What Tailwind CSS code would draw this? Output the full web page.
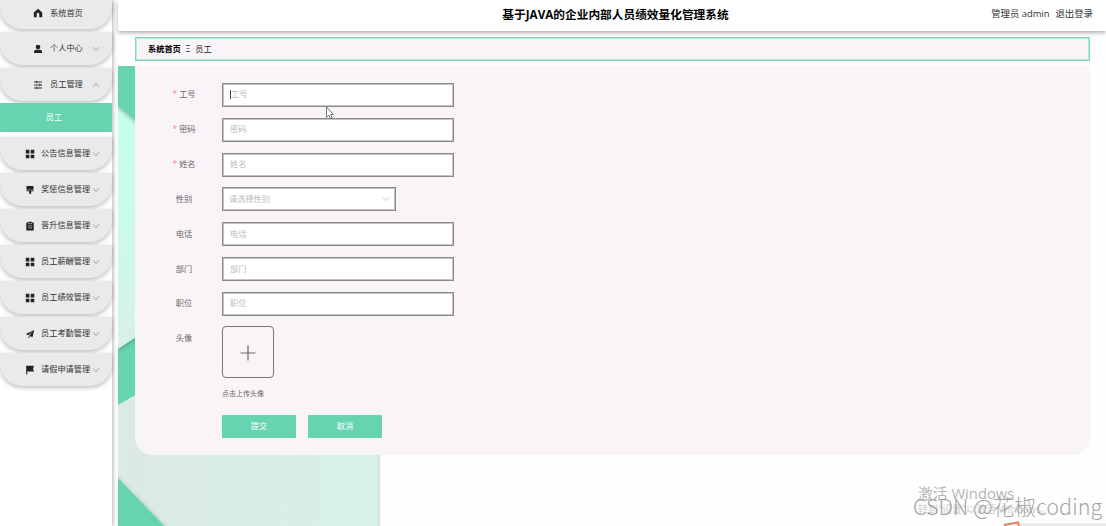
<!DOCTYPE html>
<html lang="zh-CN">
<head>
  <meta charset="UTF-8" />
  <meta name="viewport" content="width=device-width, initial-scale=1.0" />
  <title>基于JAVA的企业内部人员绩效量化管理系统</title>
  <script src="https://cdn.jsdelivr.net/npm/@tailwindcss/browser@4"></script>
</head>
<body class="relative flex h-[526px] w-[1106px] overflow-hidden bg-[#fefefe] font-['Open_Sans','Noto_Sans_CJK_SC',sans-serif] text-[8.2px] text-[#333]">
  <!-- icons -->
  <svg class="hidden">
    <symbol id="down" viewBox="0 0 8 8"><path d="M1 2.3 4 5.5 7 2.3" fill="none" stroke="#888" stroke-width=".8" /></symbol>
    <symbol id="grid" viewBox="0 0 10 10"><path d="M.8.8h3.6v3.6H.8zM5.7.8h3.6v3.6H5.7zM.8 5.7h3.6v3.6H.8zM5.7 5.7h3.6v3.6H5.7z" fill="#222" /></symbol>
  </svg>

  <!-- sidebar -->
  <aside class="flex w-[112px] shrink-0 flex-col bg-white shadow-[1px_0_4px_rgba(0,0,0,0.3)]">
    <nav class="flex flex-col">
      <a class="flex h-[29px] items-center rounded-b-[22px] bg-[#eaeaea] pb-[3px] pl-[33px] shadow-[0_2px_4px_rgba(0,0,0,0.25)]">
        <svg class="size-[10px]" viewBox="0 0 10 10"><path d="M5 .8 9.2 4.5V9.2H6.3V6a1.3 1.3 0 0 0-2.6 0v3.2H.8V4.5z" fill="#222" /></svg>
        <span class="ml-[7px]">系统首页</span>
      </a>
      <a class="mt-[3px] flex h-[33px] items-center rounded-b-[22px] bg-[#eaeaea] pl-[33px] shadow-[0_2px_4px_rgba(0,0,0,0.25)]">
        <svg class="size-[10px]" viewBox="0 0 10 10"><circle cx="5" cy="3" r="2.3" fill="#222" /><path d="M1 9V7.6Q1 5.8 3 5.8h4q2 0 2 1.8V9z" fill="#222" /></svg>
        <span class="ml-[7px]">个人中心</span>
        <svg class="ml-auto mr-[12px] size-2"><use href="#down" /></svg>
      </a>
      <a class="mt-[3px] flex h-[33px] items-center rounded-b-[22px] bg-[#eaeaea] pl-[33px] shadow-[0_2px_4px_rgba(0,0,0,0.25)]">
        <svg class="size-[10px]" viewBox="0 0 10 10" fill="none" stroke="#222" stroke-width=".9"><path d="M1 2h1.700M4.700 2H9M1 5h4.700M7.700 5H9M1 8h1.700M4.700 8H9" /><circle cx="3.7" cy="2" r=".8" /><circle cx="6.7" cy="5" r=".8" /><circle cx="3.7" cy="8" r=".8" /></svg>
        <span class="ml-[7px]">员工管理</span>
        <svg class="ml-auto mr-[12px] size-2 rotate-180"><use href="#down" /></svg>
      </a>
      <a class="relative mt-[2px] flex h-[29px] items-center justify-center bg-[#66d4b1] pr-1 text-white">员工</a>
      <a class="mt-[5px] flex h-[33px] items-center rounded-b-[22px] bg-[#eaeaea] pl-[25px] shadow-[0_2px_4px_rgba(0,0,0,0.25)]">
        <svg class="size-[10px]"><use href="#grid" /></svg>
        <span class="ml-[6px]">公告信息管理</span>
        <svg class="ml-auto mr-[12px] size-2"><use href="#down" /></svg>
      </a>
      <a class="mt-[3px] flex h-[33px] items-center rounded-b-[22px] bg-[#eaeaea] pl-[25px] shadow-[0_2px_4px_rgba(0,0,0,0.25)]">
        <svg class="size-[10px]" viewBox="0 0 10 10"><path d="M1.5 1h7v3.7h-7zM1.5 5.2h7v1H6.3L6 9H4.500L4 6.200H1.500z" fill="#222" /></svg>
        <span class="ml-[6px]">奖惩信息管理</span>
        <svg class="ml-auto mr-[12px] size-2"><use href="#down" /></svg>
      </a>
      <a class="mt-[3px] flex h-[33px] items-center rounded-b-[22px] bg-[#eaeaea] pl-[25px] shadow-[0_2px_4px_rgba(0,0,0,0.25)]">
        <svg class="size-[10px]" viewBox="0 0 10 10"><path d="M1.3 1.6h2V.7h3.4v.9h2v7.8H1.3z" fill="#222" /><path d="M3 2.6h4M3 4.9h4M3 6.9h4" stroke="#ccc" stroke-width=".7" /></svg>
        <span class="ml-[6px]">晋升信息管理</span>
        <svg class="ml-auto mr-[12px] size-2"><use href="#down" /></svg>
      </a>
      <a class="mt-[3px] flex h-[33px] items-center rounded-b-[22px] bg-[#eaeaea] pl-[25px] shadow-[0_2px_4px_rgba(0,0,0,0.25)]">
        <svg class="size-[10px]"><use href="#grid" /></svg>
        <span class="ml-[6px]">员工薪酬管理</span>
        <svg class="ml-auto mr-[12px] size-2"><use href="#down" /></svg>
      </a>
      <a class="mt-[3px] flex h-[33px] items-center rounded-b-[22px] bg-[#eaeaea] pl-[25px] shadow-[0_2px_4px_rgba(0,0,0,0.25)]">
        <svg class="size-[10px]"><use href="#grid" /></svg>
        <span class="ml-[6px]">员工绩效管理</span>
        <svg class="ml-auto mr-[12px] size-2"><use href="#down" /></svg>
      </a>
      <a class="mt-[3px] flex h-[33px] items-center rounded-b-[22px] bg-[#eaeaea] pl-[25px] shadow-[0_2px_4px_rgba(0,0,0,0.25)]">
        <svg class="size-[10px]" viewBox="0 0 10 10"><path d="M9.2.9.8 5l2.4 1.2L7.6 2.6 4.2 6.7 7.5 8.3zM3.6 7l1.4.8L3.7 9.4z" fill="#222" /></svg>
        <span class="ml-[6px]">员工考勤管理</span>
        <svg class="ml-auto mr-[12px] size-2"><use href="#down" /></svg>
      </a>
      <a class="mt-[3px] flex h-[33px] items-center rounded-b-[22px] bg-[#eaeaea] pl-[25px] shadow-[0_2px_4px_rgba(0,0,0,0.25)]">
        <svg class="size-[10px]" viewBox="0 0 10 10"><path d="M1.200.8H9L8 3.700l1 2.900H2.300v2.800H1.200z" fill="#222" /></svg>
        <span class="ml-[6px]">请假申请管理</span>
        <svg class="ml-auto mr-[12px] size-2"><use href="#down" /></svg>
      </a>
    </nav>
  </aside>

  <div class="ml-[6px] flex flex-1 flex-col">
    <header class="grid h-[31px] shrink-0 grid-cols-[1fr_auto_1fr] items-center bg-white pb-[2px] pr-[13px] shadow-[0_2px_4px_rgba(0,0,0,0.3)]">
      <span></span>
      <h1 class="ml-[20px] text-[11.7px] font-bold whitespace-nowrap text-black">基于JAVA的企业内部人员绩效量化管理系统</h1>
      <div class="flex justify-end gap-[6px] text-[9.4px]"><span>管理员 admin</span><span>退出登录</span></div>
    </header>

    <div class="mt-[6px] ml-[17px] flex h-[24px] w-[955px] shrink-0 items-center gap-[5px] border border-[#7fd8be] bg-[#f8f4f8] pl-[12px] text-[8.2px] text-[#222] inset-shadow-[0_0_0_1px_#b5e6d8]">
      <b class="text-black">系统首页</b><span>Ξ</span><span>员工</span>
    </div>

    <main class="relative mt-[5px] flex-1">
      <!-- folded paper background -->
      <svg class="absolute top-0 left-0 h-[460px] w-[264px]" viewBox="0 0 264 460">
        <defs>
          <linearGradient id="mint" x1="0" y1="0" x2="0" y2="1"><stop offset="0" stop-color="#c6ffee" /><stop offset=".45" stop-color="#c9fbec" /><stop offset="1" stop-color="#d8efe8" /></linearGradient>
          <linearGradient id="pale" x1="0" y1="0" x2="1" y2="0"><stop offset="0" stop-color="#dce9e5" /><stop offset="1" stop-color="#d6f1e8" /></linearGradient>
          <filter id="sh" x="-20%" y="-20%" width="140%" height="140%"><feDropShadow dx="0" dy="1" stdDeviation="2" flood-color="#000" flood-opacity=".35" /></filter>
        </defs>
        <rect width="260" height="470" fill="url(#pale)" filter="url(#sh)" />
        <path d="M0 270H50V310L0 339z" fill="#66d4b1" />
        <path d="M0 40H60V243L0 283z" fill="url(#mint)" filter="url(#sh)" />
        <path d="M0 0H60V90L0 40z" fill="#66d4b1" filter="url(#sh)" />
        <path d="M-9 403 60 474H-9z" fill="#66d4b1" filter="url(#sh)" />
      </svg>

      <section class="relative ml-[17px] h-[389px] w-[955px] rounded-b-[17px] bg-[#f8f4f8] pt-[17px] pl-[11px] text-[#666]">
        <form class="flex flex-col gap-[10.75px]">
          <div class="flex h-[24px] items-center">
            <label class="w-[76px] pb-px text-center"><span class="text-[#f58a94]">*</span> 工号</label>
            <div class="flex h-[24px] w-[232px] items-center border border-[#8a898b] bg-white pb-px pl-[7px] text-[#bbb] inset-shadow-[0_0_0_1px_#c4c4c4]"><i class="h-[9px] w-px bg-[#444]"></i>工号</div>
          </div>
          <div class="flex h-[24px] items-center">
            <label class="w-[76px] pb-px text-center"><span class="text-[#f58a94]">*</span> 密码</label>
            <div class="flex h-[24px] w-[232px] items-center border border-[#8a898b] bg-white pb-px pl-[7px] text-[#bbb] inset-shadow-[0_0_0_1px_#c4c4c4]">密码</div>
          </div>
          <div class="flex h-[24px] items-center">
            <label class="w-[76px] pb-px text-center"><span class="text-[#f58a94]">*</span> 姓名</label>
            <div class="flex h-[24px] w-[232px] items-center border border-[#8a898b] bg-white pb-px pl-[7px] text-[#bbb] inset-shadow-[0_0_0_1px_#c4c4c4]">姓名</div>
          </div>
          <div class="flex h-[24px] items-center">
            <label class="w-[76px] text-center">性别</label>
            <div class="flex h-[24px] w-[174px] items-center justify-between border border-[#8a898b] bg-white pr-[5px] pl-[6px] text-[#bbb] inset-shadow-[0_0_0_1px_#c4c4c4]">请选择性别<svg class="size-2 opacity-60"><use href="#down" /></svg></div>
          </div>
          <div class="flex h-[24px] items-center">
            <label class="w-[76px] text-center">电话</label>
            <div class="flex h-[24px] w-[232px] items-center border border-[#8a898b] bg-white pl-[7px] text-[#bbb] inset-shadow-[0_0_0_1px_#c4c4c4]">电话</div>
          </div>
          <div class="flex h-[24px] items-center">
            <label class="w-[76px] text-center">部门</label>
            <div class="flex h-[24px] w-[232px] items-center border border-[#8a898b] bg-white pl-[7px] text-[#bbb] inset-shadow-[0_0_0_1px_#c4c4c4]">部门</div>
          </div>
          <div class="flex h-[24px] items-center">
            <label class="w-[76px] pb-px text-center">职位</label>
            <div class="flex h-[24px] w-[232px] items-center border border-[#8a898b] bg-white pb-px pl-[7px] text-[#bbb] inset-shadow-[0_0_0_1px_#c4c4c4]">职位</div>
          </div>
          <div class="flex items-start">
            <label class="w-[76px] text-center leading-[24px]">头像</label>
            <div>
              <div class="flex size-[52px] items-center justify-center rounded-[4px] border border-[#777]">
                <svg class="mt-[2px] size-[16px]" viewBox="0 0 16 16"><path d="M8 .5v15M.5 8h15" stroke="#666" stroke-width="1.2" /></svg>
              </div>
              <p class="mt-[11px] text-[7px] leading-[10px]">点击上传头像</p>
            </div>
          </div>
          <div class="mt-[5px] ml-[76px] flex gap-[12px] text-white">
            <button type="button" class="h-[23px] w-[74px] rounded-[1px] bg-[#66d4b1]">提交</button>
            <button type="button" class="h-[23px] w-[74px] rounded-[1px] bg-[#66d4b1]">取消</button>
          </div>
        </form>
      </section>
    </main>
  </div>

  <!-- mouse pointer -->
  <svg class="absolute top-[106px] left-[325px] h-[14px] w-[10px]" viewBox="0 0 10 14"><path d="M1.500 1v10.200l2.300-2 1.700 3.500 1.700-.8-1.600-3.400h2.900z" fill="#fff" stroke="#555" stroke-width=".8" /></svg>

  <!-- watermarks -->
  <p class="absolute top-[484px] left-[918px] text-[14.800px] leading-[18px] whitespace-nowrap text-[#b5b5b5]">激活 Windows</p>
  <p class="absolute top-[503px] left-[918px] text-[10px] leading-[13px] whitespace-nowrap text-[#cfcfcf]">转到"设置"以激活 Windows。</p>
  <p class="absolute top-[493px] left-[913px] font-['Noto_Sans_CJK_SC',sans-serif] text-[21.600px] leading-[26px] font-light whitespace-nowrap text-[#8c8c8c]/80">CSDN @花椒coding</p>
  <div class="absolute top-[523px] left-[1018px] h-[3px] w-[88px] bg-[#ececee]"></div>
  <svg class="absolute top-[521px] left-[1003px] h-[5px] w-[17px]" viewBox="0 0 17 5"><path d="M1 4 15 1.500 16 6" fill="none" stroke="#ee7b52" stroke-width="2" /></svg>
</body>
</html>
